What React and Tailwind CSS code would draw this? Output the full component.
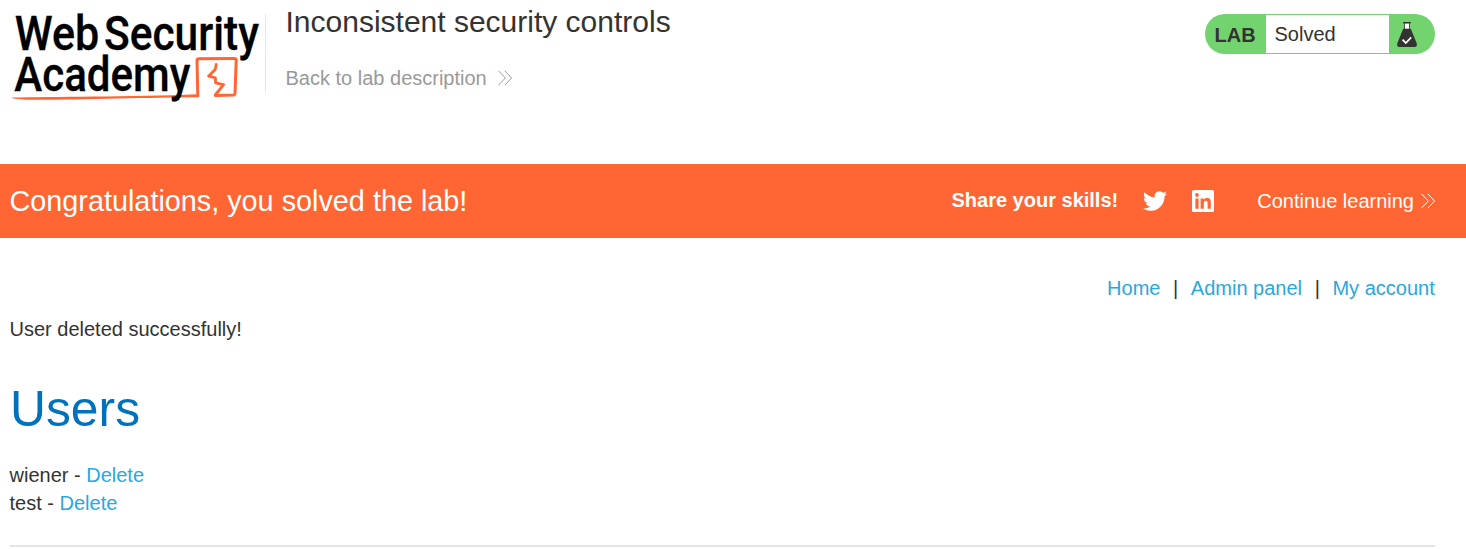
import React from 'react';

function Logo() {
  return (
    <svg width="265" height="110" viewBox="0 0 265 110" className="block shrink-0 overflow-visible" aria-label="Web Security Academy">
      <g fill="none" stroke="#ff6633" strokeLinejoin="round" strokeLinecap="round">
        <path d="M197.8 95.8 L197 60.2 Q197 58.9 199 58.8 L234 58.6 Q236.2 58.6 236.2 60 L235 93.6 Q235 94.9 233.4 95 L215.6 95.6" strokeWidth="3" />
        <path d="M215.2 95 L223.6 84.6 L215.6 82.8 L215.4 77.8 L208.6 76.2 L215.2 69.4 L216.2 64.4" strokeWidth="2.8" />
      </g>
      <path d="M11 97.6 C50 96.8 130 97 198 94.3 L198 97.3 C150 97.4 80 100 30 99.8 C20 99.7 14 99 11 97.6 Z" fill="#ff6633" />
      <g fill="#000" stroke="#000" strokeWidth="0.3" className="font-['Roboto',sans-serif] font-medium" fontSize="47.5">
        <text x="14.8" y="50" textLength="84.5" lengthAdjust="spacingAndGlyphs">Web</text>
        <text x="104" y="50" textLength="155" lengthAdjust="spacingAndGlyphs">Security</text>
        <text x="14.3" y="90.7" textLength="176" lengthAdjust="spacingAndGlyphs">Academy</text>
      </g>
    </svg>
  );
}

function Chevrons() {
  return (
    <svg width="14" height="16" viewBox="0 0 14 16" fill="none" stroke="currentColor" strokeWidth="1" className="block shrink-0">
      <path d="M0.5 0.8 L7.3 8 L0.5 15.2 M6.8 0.8 L13.6 8 L6.8 15.2" />
    </svg>
  );
}

function Flask() {
  return (
    <svg width="20" height="26" viewBox="0 0 20 26" className="block">
      <rect x="7.5" y="1" width="5" height="6.5" fill="#fff" stroke="#333332" strokeWidth="0.8" />
      <path d="M6 0.6 H14" stroke="#333332" strokeWidth="1.2" />
      <path d="M6.2 6.8 H13.8 L19.6 21 Q20.6 25 17.8 25 H2.2 Q-0.6 25 0.4 21 Z" fill="#333332" />
      <path d="M5.6 17.6 L8.8 21 L14.2 15.4" fill="none" stroke="#fff" strokeWidth="1.7" />
    </svg>
  );
}

function Twitter() {
  return (
    <svg width="24" height="24" viewBox="0 0 24 24" fill="#fff" className="block">
      <path d="M23.953 4.57a10 10 0 0 1-2.825.775 4.958 4.958 0 0 0 2.163-2.723c-.951.555-2.005.959-3.127 1.184a4.92 4.92 0 0 0-8.384 4.482C7.69 8.095 4.067 6.13 1.64 3.162a4.822 4.822 0 0 0-.666 2.475c0 1.71.87 3.213 2.188 4.096a4.904 4.904 0 0 1-2.228-.616v.06a4.923 4.923 0 0 0 3.946 4.827 4.996 4.996 0 0 1-2.212.085 4.936 4.936 0 0 0 4.604 3.417 9.867 9.867 0 0 1-6.102 2.105c-.39 0-.779-.023-1.17-.067a13.995 13.995 0 0 0 7.557 2.209c9.053 0 13.998-7.496 13.998-13.985 0-.21 0-.42-.015-.63A9.935 9.935 0 0 0 24 4.59z" />
    </svg>
  );
}

function LinkedIn() {
  return (
    <svg width="22" height="22" viewBox="0 0 22 22" className="block">
      <rect width="22" height="22" rx="1.6" fill="#fff" />
      <circle cx="5" cy="5" r="1.9" fill="#ff6633" />
      <path d="M3.4 8.4 H6.6 V18.8 H3.4 Z M8.6 8.4 H11.7 V9.8 C12.4 8.7 13.5 8.1 14.9 8.1 C18 8.1 18.8 10.1 18.8 12.9 V18.8 H15.6 V13.6 C15.6 12.2 15.5 10.8 13.8 10.8 C12.1 10.8 11.8 12.1 11.8 13.5 V18.8 H8.6 Z" fill="#ff6633" />
    </svg>
  );
}

const users = ['wiener', 'test'];

export default function App() {
  return (
    <div className="h-[549px] w-[1466px] overflow-hidden bg-white font-['Liberation_Sans',Arial,sans-serif] text-[20px] leading-[28px] whitespace-nowrap text-[#333332]">
      <header className="flex h-[164px] items-start pr-[31px]">
        <Logo />
        <div className="mt-[14px] h-[78px] w-px shrink-0 bg-[#e5e5e5]" />
        <div className="flex flex-1 flex-col pl-[19.5px]">
          <h2 className="mt-[1px] text-[30px] leading-[42px]">Inconsistent security controls</h2>
          <a className="mt-[21px] flex items-center gap-[11.5px] text-[#999]">
            Back to lab description <Chevrons />
          </a>
        </div>
        <div className="mt-[14px] flex h-[40px] w-[230px] overflow-hidden rounded-[20px] bg-[#72d36f]">
          <div className="w-[61px] pt-[7px] pl-[9.5px] font-bold">LAB</div>
          <div className="my-px w-[123px] bg-white pt-[5px] pl-[8.5px]">Solved</div>
          <div className="pt-[8px] pl-[8px]"><Flask /></div>
        </div>
      </header>

      <section className="flex h-[74px] items-center bg-[#ff6633] pr-[31px] pl-[9.5px] text-white">
        <div className="flex-1 text-[28.8px] leading-[40px]">Congratulations, you solved the lab!</div>
        <div className="mb-[2px] font-bold">Share your skills!</div>
        <div className="ml-[25px]"><Twitter /></div>
        <div className="ml-[25px]"><LinkedIn /></div>
        <a className="ml-[43px] flex items-center gap-[7px]">Continue learning <Chevrons /></a>
      </section>

      <main className="pr-[31px] pl-[10px]">
        <nav className="flex justify-end gap-[12.6px] pt-[36px] pr-[0.3px] text-[#29a7df]">
          <a>Home</a>
          <span className="text-[#333332]">|</span>
          <a>Admin panel</a>
          <span className="text-[#333332]">|</span>
          <a>My account</a>
        </nav>
        <p className="mt-[13px] -ml-[0.5px]">User deleted successfully!</p>
        <h1 className="mt-[31px] text-[49.8px] leading-[70px] text-[#0071bc]">Users</h1>
        <div className="mt-[17px] -ml-[0.5px]">
          {users.map((name) => (
            <div key={name}>
              {name} - <a className="text-[#29a7df]">Delete</a>
            </div>
          ))}
        </div>
        <hr className="mt-[28px] border-t-2 border-[#e5e5e5]" />
      </main>
    </div>
  );
}
